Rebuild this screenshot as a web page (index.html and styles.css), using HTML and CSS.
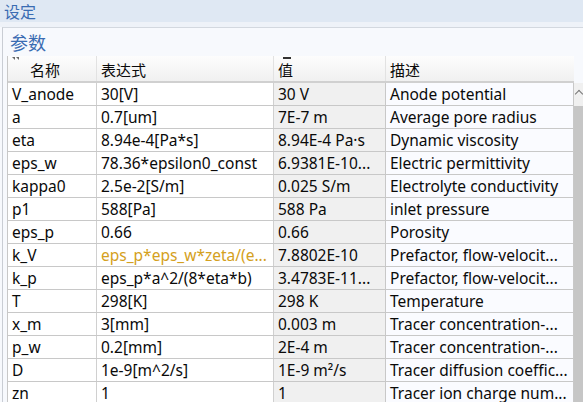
FILE: index.html
```html
<!DOCTYPE html>
<html>
<head>
<meta charset="utf-8">
<link rel="stylesheet" href="styles.css">
</head>
<body>
<div class="topbar"><span class="title">设定</span></div>
<div class="panel">
  <div class="section">参数</div>
  <div class="tablewrap">
    <div class="table">
      <div class="row head">
        <div class="c c1"><span class="sorticon"></span><span class="sorticon two"></span>名称</div>
        <div class="c c2">表达式</div>
        <div class="c c3"><span class="valmark"></span>值</div>
        <div class="c c4">描述</div>
      </div>
      <div class="row"><div class="c c1">V_anode</div><div class="c c2">30[V]</div><div class="c c3">30 V</div><div class="c c4">Anode potential</div></div>
      <div class="row"><div class="c c1">a</div><div class="c c2">0.7[um]</div><div class="c c3">7E-7 m</div><div class="c c4">Average pore radius</div></div>
      <div class="row"><div class="c c1">eta</div><div class="c c2">8.94e-4[Pa*s]</div><div class="c c3">8.94E-4 Pa·s</div><div class="c c4">Dynamic viscosity</div></div>
      <div class="row"><div class="c c1">eps_w</div><div class="c c2">78.36*epsilon0_const</div><div class="c c3">6.9381E-10...</div><div class="c c4">Electric permittivity</div></div>
      <div class="row"><div class="c c1">kappa0</div><div class="c c2">2.5e-2[S/m]</div><div class="c c3">0.025 S/m</div><div class="c c4">Electrolyte conductivity</div></div>
      <div class="row"><div class="c c1">p1</div><div class="c c2">588[Pa]</div><div class="c c3">588 Pa</div><div class="c c4">inlet pressure</div></div>
      <div class="row"><div class="c c1">eps_p</div><div class="c c2">0.66</div><div class="c c3">0.66</div><div class="c c4">Porosity</div></div>
      <div class="row"><div class="c c1">k_V</div><div class="c c2 warn">eps_p*eps_w*zeta/(e...</div><div class="c c3">7.8802E-10</div><div class="c c4">Prefactor, flow-velocit...</div></div>
      <div class="row"><div class="c c1">k_p</div><div class="c c2">eps_p*a^2/(8*eta*b)</div><div class="c c3">3.4783E-11...</div><div class="c c4">Prefactor, flow-velocit...</div></div>
      <div class="row"><div class="c c1">T</div><div class="c c2">298[K]</div><div class="c c3">298 K</div><div class="c c4">Temperature</div></div>
      <div class="row"><div class="c c1">x_m</div><div class="c c2">3[mm]</div><div class="c c3">0.003 m</div><div class="c c4">Tracer concentration-...</div></div>
      <div class="row"><div class="c c1">p_w</div><div class="c c2">0.2[mm]</div><div class="c c3">2E-4 m</div><div class="c c4">Tracer concentration-...</div></div>
      <div class="row"><div class="c c1">D</div><div class="c c2">1e-9[m^2/s]</div><div class="c c3">1E-9 m²/s</div><div class="c c4">Tracer diffusion coeffic...</div></div>
      <div class="row"><div class="c c1">zn</div><div class="c c2">1</div><div class="c c3">1</div><div class="c c4">Tracer ion charge num...</div></div>
    </div>
    <div class="scroll">
      <div class="scrolltop"><span class="arrow"></span></div>
      <div class="thumb"></div>
    </div>
  </div>
</div>
</body>
</html>
```
FILE: styles.css
```css
html, body {
  margin: 0;
  padding: 0;
  width: 583px;
  height: 402px;
  overflow: hidden;
  background: #f7f9fd;
  font-family: "Noto Sans", "Noto Sans CJK SC", sans-serif;
  font-size: 15.5px;
  color: #0a0a0a;
}
.topbar {
  height: 22px;
  background: #dfe8f3;
  border-bottom: 5px solid #eef2f8;
  box-sizing: content-box;
  display: flex;
  align-items: center;
  padding-left: 4px;
}
.title {
  font-family: "Noto Sans CJK SC", sans-serif;
  font-size: 16px;
  color: #3a6cb2;
  line-height: 20px;
}
.panel {
  border-top: 1px solid #d3d8df;
  border-left: 1px solid #c9cdd4;
  margin-left: 2px;
  padding-left: 4px;
  background: #f7f9fd;
}
.section {
  font-family: "Noto Sans CJK SC", sans-serif;
  font-size: 18px;
  color: #3a6cb2;
  height: 28px;
  line-height: 29px;
  padding-left: 3px;
}
.tablewrap {
  display: flex;
}
.table {
  width: 566px;
  border-left: 1px solid #c8c8c8;
  background: #fff;
}
.row {
  display: grid;
  grid-template-columns: 89px 177px 112px 188px;
  height: 23px;
  border-bottom: 1px solid #c8c8c8;
  box-sizing: border-box;
}
.c {
  padding-left: 4px;
  line-height: 22px;
  white-space: nowrap;
  overflow: hidden;
  border-right: 1px solid #d0d0d0;
  box-sizing: border-box;
}
.c3 { background: #f0f0f0; border-right: 1px solid #c8c8c8; }
.c4 { background: #fafbff; border-right: 1px solid #c8c8c8; }
.warn { color: #d4a020; }
.head {
  height: 27px;
  background: linear-gradient(#fdfdfd, #f0f0f0);
  border-bottom: 2px solid #d0d0d0;
  font-family: "Noto Sans CJK SC", sans-serif;
  font-size: 15px;
}
.head .c {
  background: transparent;
  line-height: 27px;
  position: relative;
  border-right: 1px solid #e2e2e2;
}
.head .c1 { padding-left: 22px; }
.head .c4 { border-right: none; }
.sorticon {
  position: absolute;
  left: 4px;
  top: 1px;
  width: 0;
  height: 0;
  border-top: 3px solid #666;
  border-left: 3px solid transparent;
}
.sorticon.two { left: 8px; }
.valmark {
  position: absolute;
  left: 9px;
  top: 1px;
  width: 8px;
  height: 2px;
  background: #333;
}
.scroll {
  width: 10px;
  display: flex;
  flex-direction: column;
  padding-top: 27px;
}
.scrolltop {
  height: 23px;
  background: #f0f0f0;
  position: relative;
}
.arrow {
  position: absolute;
  left: 2px;
  top: 8px;
  width: 5px;
  height: 5px;
  border-top: 1px solid #777;
  border-left: 1px solid #777;
  transform: rotate(45deg);
}
.thumb {
  flex: 1;
  height: 320px;
  background: #c6c6c6;
}
```
